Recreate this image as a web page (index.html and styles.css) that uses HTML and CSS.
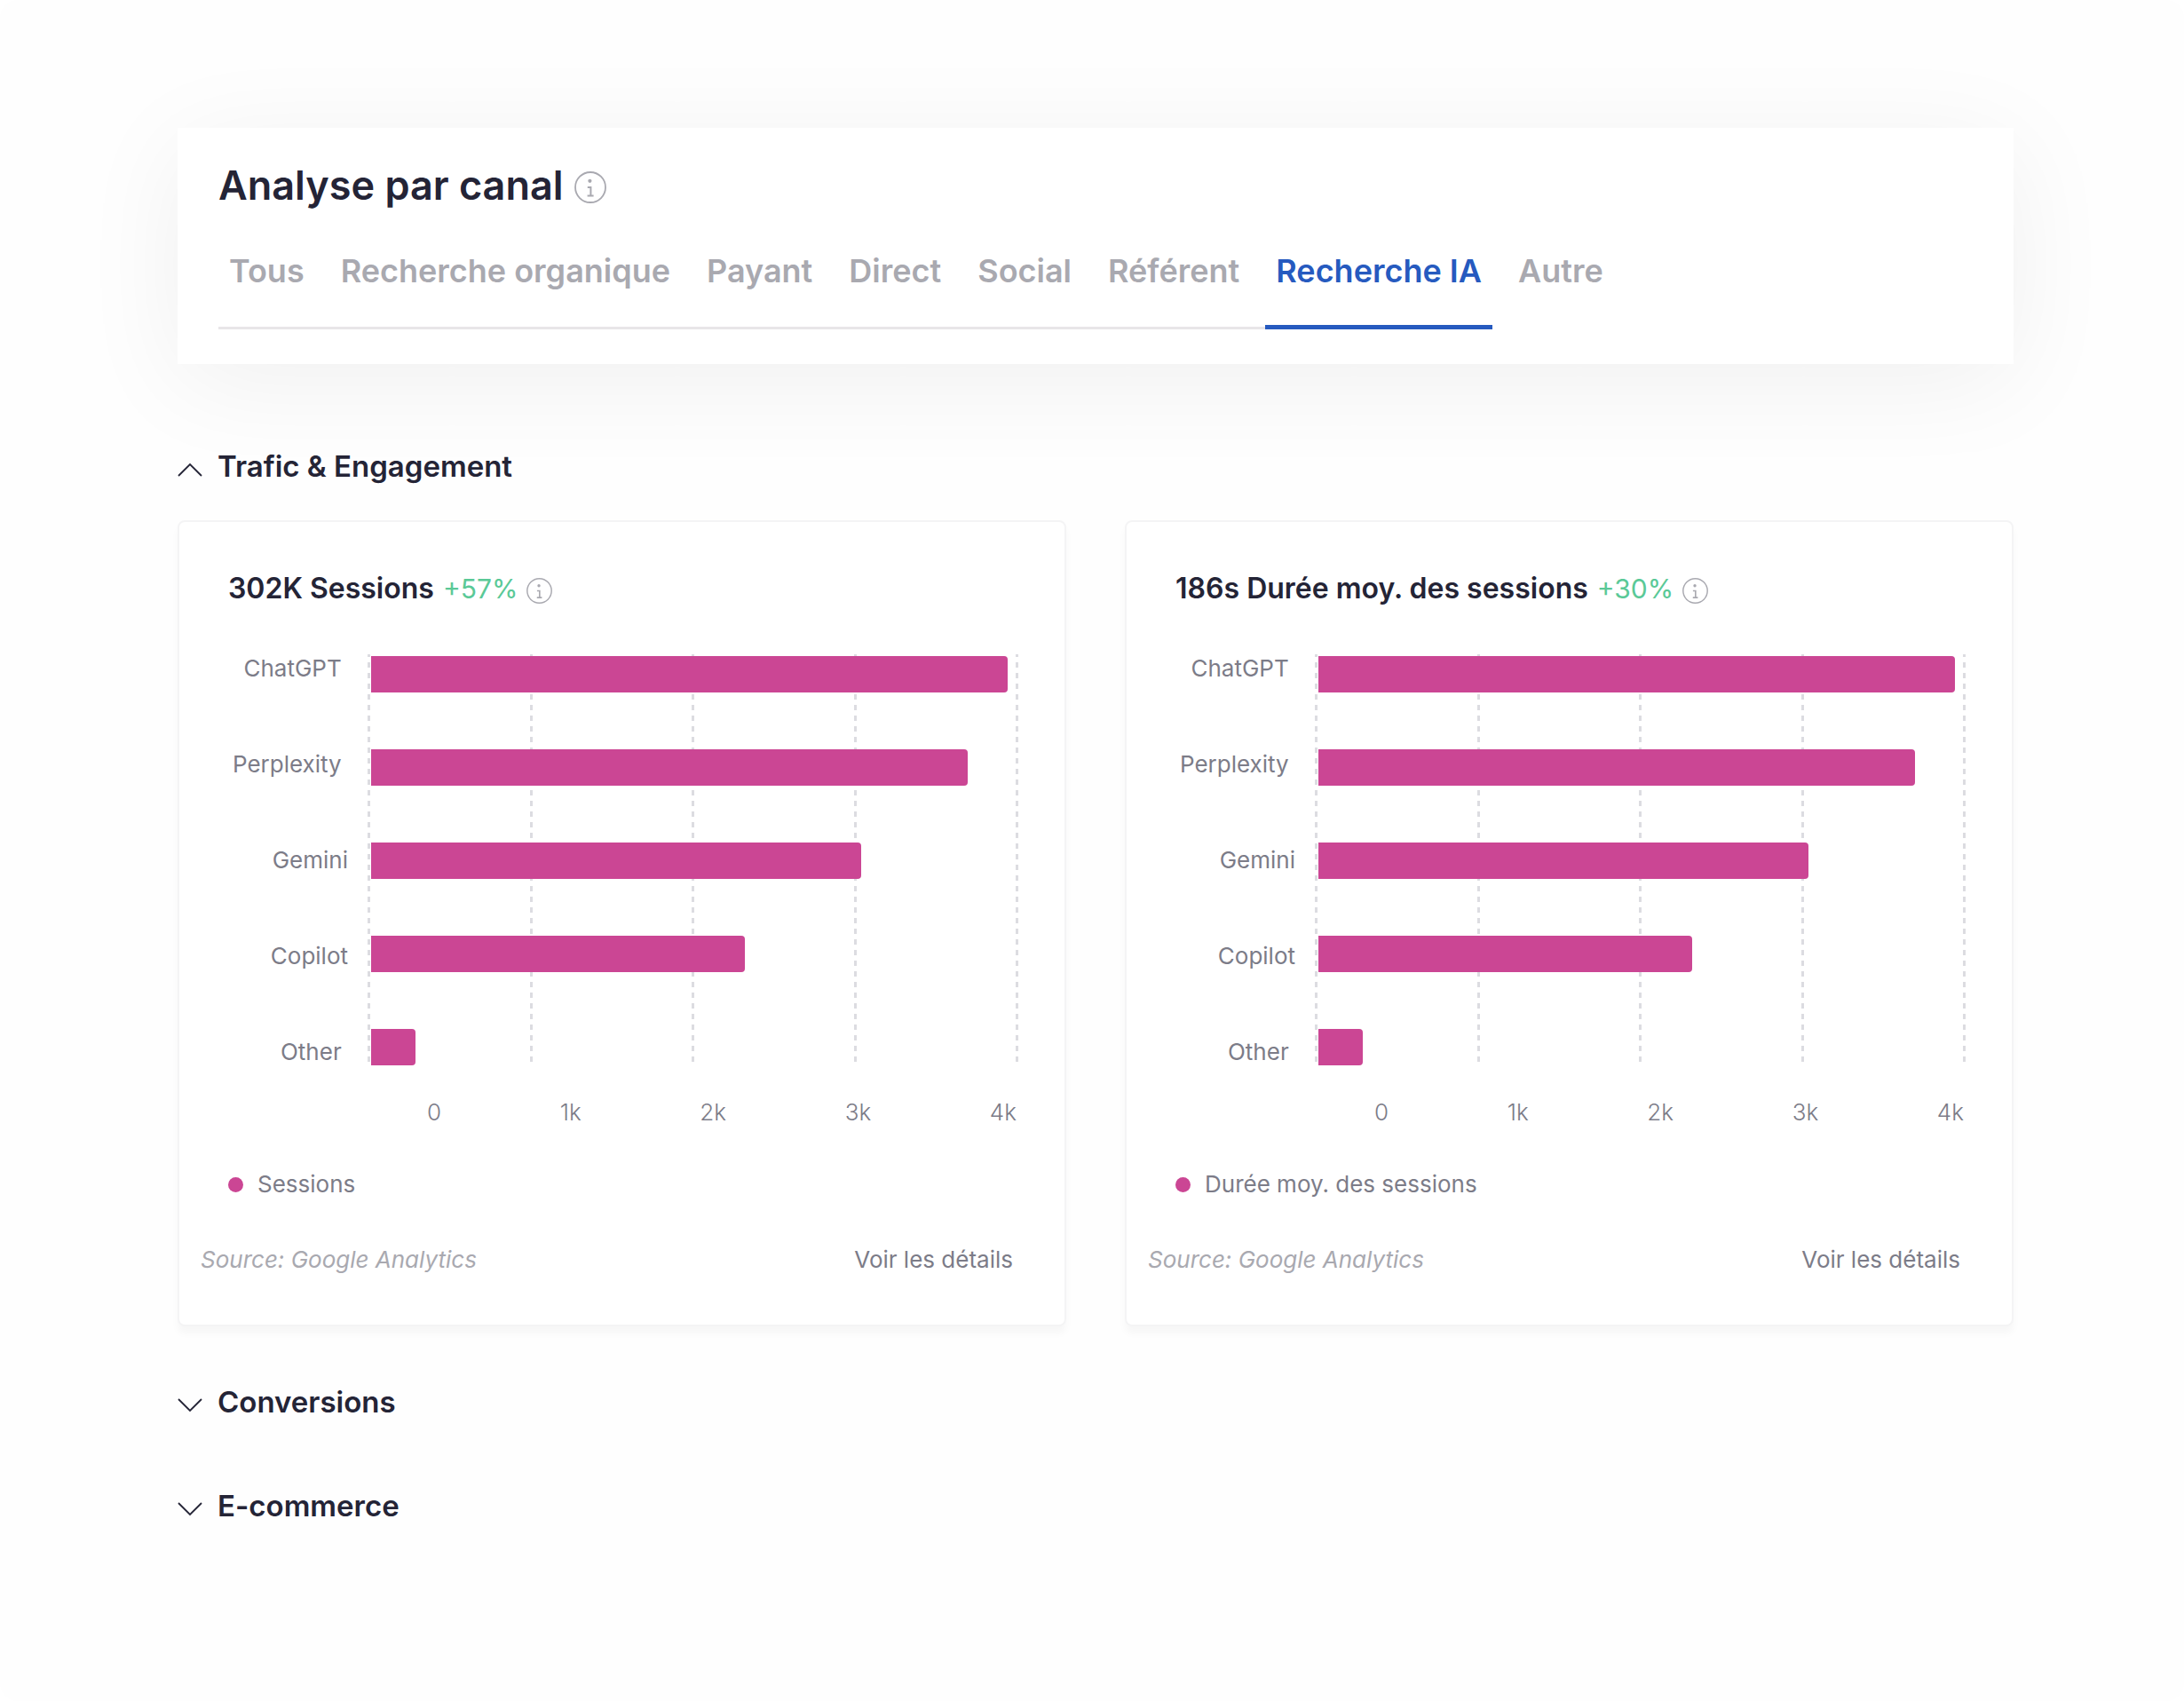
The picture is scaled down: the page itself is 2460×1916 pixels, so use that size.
FILE: index.html
```
<!DOCTYPE html>
<html lang="fr">
<head>
    <meta charset="UTF-8">
    <meta name="viewport" content="width=device-width, initial-scale=1.0">
    <title>Analyse par canal</title>
    <link rel="stylesheet" href="styles.css">
</head>
<body>
    <!-- Shared icons -->
    <svg class="sprite" aria-hidden="true">
        <symbol id="icon-info" viewBox="0 0 36 36">
            <circle cx="18" cy="18" r="17" fill="none" stroke="currentColor" stroke-width="1.8"/>
            <circle cx="17.4" cy="10.8" r="2.1" fill="currentColor"/>
            <path d="M14.8 18h3.6v9M14.6 27.4h7" fill="none" stroke="currentColor" stroke-width="2"/>
        </symbol>
        <symbol id="icon-chevron" viewBox="0 0 28 16">
            <path d="M1 1l13 13L27 1" fill="none" stroke="currentColor" stroke-width="1.8"/>
        </symbol>
    </svg>

    <main class="page">
        <header class="channel-card">
            <h1 class="channel-title">
                Analyse par canal
                <svg class="info-icon large"><use href="#icon-info"/></svg>
            </h1>
            <ul class="tabs">
                <li class="tab"><button type="button">Tous</button></li>
                <li class="tab"><button type="button">Recherche organique</button></li>
                <li class="tab"><button type="button">Payant</button></li>
                <li class="tab"><button type="button">Direct</button></li>
                <li class="tab"><button type="button">Social</button></li>
                <li class="tab"><button type="button">Référent</button></li>
                <li class="tab active"><button type="button" aria-current="true">Recherche IA</button></li>
                <li class="tab"><button type="button">Autre</button></li>
            </ul>
        </header>

        <section class="section">
            <h2>
                <button class="section-toggle" type="button" aria-expanded="true">
                    <svg class="chevron"><use href="#icon-chevron"/></svg>
                    Trafic &amp; Engagement
                </button>
            </h2>

            <div class="cards">
                <article class="card">
                    <h3 class="card-title">
                        302K Sessions
                        <span class="growth">+57%</span>
                        <svg class="info-icon"><use href="#icon-info"/></svg>
                    </h3>
                    <div class="chart">
                        <ul class="labels">
                            <li>ChatGPT&nbsp;</li>
                            <li>Perplexity&nbsp;</li>
                            <li>Gemini</li>
                            <li>Copilot</li>
                            <li>Other&nbsp;</li>
                        </ul>
                        <div class="plot">
                            <div class="grid"><i></i><i></i><i></i><i></i><i></i></div>
                            <div class="bar" style="width: 98.4%"></div>
                            <div class="bar" style="width: 92.2%"></div>
                            <div class="bar" style="width: 75.7%"></div>
                            <div class="bar" style="width: 57.8%"></div>
                            <div class="bar" style="width: 6.8%"></div>
                        </div>
                    </div>
                    <div class="axis">
                        <span>0</span><span>1k</span><span>2k</span><span>3k</span><span>4k</span>
                    </div>
                    <p class="legend">Sessions</p>
                    <footer class="card-footer">
                        <em class="source">Source: Google Analytics</em>
                        <a class="details" href="#">Voir les détails</a>
                    </footer>
                </article>

                <article class="card">
                    <h3 class="card-title">
                        186s Durée moy. des sessions
                        <span class="growth">+30%</span>
                        <svg class="info-icon"><use href="#icon-info"/></svg>
                    </h3>
                    <div class="chart">
                        <ul class="labels">
                            <li>ChatGPT&nbsp;</li>
                            <li>Perplexity&nbsp;</li>
                            <li>Gemini</li>
                            <li>Copilot</li>
                            <li>Other&nbsp;</li>
                        </ul>
                        <div class="plot">
                            <div class="grid"><i></i><i></i><i></i><i></i><i></i></div>
                            <div class="bar" style="width: 98.4%"></div>
                            <div class="bar" style="width: 92.2%"></div>
                            <div class="bar" style="width: 75.7%"></div>
                            <div class="bar" style="width: 57.8%"></div>
                            <div class="bar" style="width: 6.8%"></div>
                        </div>
                    </div>
                    <div class="axis">
                        <span>0</span><span>1k</span><span>2k</span><span>3k</span><span>4k</span>
                    </div>
                    <p class="legend">Durée moy. des sessions</p>
                    <footer class="card-footer">
                        <em class="source">Source: Google Analytics</em>
                        <a class="details" href="#">Voir les détails</a>
                    </footer>
                </article>
            </div>
        </section>

        <section class="section collapsed">
            <h2>
                <button class="section-toggle" type="button" aria-expanded="false">
                    <svg class="chevron"><use href="#icon-chevron"/></svg>
                    Conversions
                </button>
            </h2>
        </section>

        <section class="section collapsed">
            <h2>
                <button class="section-toggle" type="button" aria-expanded="false">
                    <svg class="chevron"><use href="#icon-chevron"/></svg>
                    E-commerce
                </button>
            </h2>
        </section>
    </main>
</body>
</html>
```
FILE: styles.css
```
* {
    margin: 0;
    padding: 0;
    box-sizing: border-box;
}

body {
    font-family: Inter, Roboto, sans-serif;
    font-size: 26px;
    line-height: 32px;
    color: #7c7c88;
    background: #fff;
}

ul {
    list-style: none;
}

button {
    font: inherit;
    color: inherit;
    background: none;
    border: none;
    cursor: pointer;
}

.sprite {
    display: none;
}

.page {
    min-height: 100vh;
    padding: 144px 192px 144px 200px;
    background: #fefefe;
    border-radius: 20px;
}

/* Channel header */
.channel-card {
    padding: 38px 46px 39px;
    background: #fff;
    box-shadow: 0 20px 120px rgba(0, 0, 0, 0.06);
}

.channel-title {
    display: flex;
    align-items: center;
    gap: 12px;
    font-size: 45px;
    font-weight: 600;
    line-height: 54px;
    color: #242436;
}

.info-icon {
    width: 29px;
    height: 29px;
    color: #a9a9b0;
}

.info-icon.large {
    width: 36px;
    height: 36px;
    margin-top: 4px;
}

.tabs {
    display: flex;
    margin-top: 47px;
    font-size: 36px;
    font-weight: 600;
    line-height: 44px;
    color: #a9a9b0;
}

.tab {
    padding-right: 17px;
    border-bottom: 3px solid #e8e6e8;
}

.tab button {
    padding: 0 12px;
}

.tab.active {
    padding-right: 0;
    margin-right: 17px;
    color: #265abf;
    border: none;
}

.tab.active button {
    padding-bottom: 39px;
    border-bottom: 5px solid #265abf;
}

.tab.active ~ .tab {
    border-color: transparent;
}

/* Sections */
.section {
    margin-top: 95px;
}

.section.collapsed {
    margin-top: 65px;
}

.section.collapsed + .collapsed {
    margin-top: 77px;
}

.section h2 {
    display: flex;
}

.section-toggle {
    display: flex;
    align-items: center;
    gap: 17px;
    font-size: 33px;
    font-weight: 600;
    line-height: 40px;
    color: #242436;
}

.chevron {
    width: 28px;
    height: 16px;
    margin-top: 8px;
}

.section-toggle[aria-expanded="true"] .chevron {
    transform: rotate(180deg);
}

/* Cards */
.cards {
    display: grid;
    grid-template-columns: 1fr 1fr;
    gap: 66px;
    margin-top: 41px;
}

.card {
    padding: 55px 52px 57px 55px;
    background: #fff;
    border: 2px solid #f4f4f5;
    border-radius: 8px;
    box-shadow: 0 8px 8px rgba(0, 0, 0, 0.03);
}

.card-title {
    display: flex;
    align-items: center;
    gap: 10px;
    font-size: 32px;
    font-weight: 600;
    line-height: 40px;
    color: #242436;
}

.growth {
    font-size: 30px;
    font-weight: 400;
    color: #5ac997;
}

.card-title .info-icon {
    margin-top: 5px;
}

/* Bar chart */
.chart {
    display: flex;
    gap: 22px;
    margin-top: 54px;
}

.labels {
    display: flex;
    flex-direction: column;
    gap: 76px;
    width: 135px;
    text-align: right;
}

.plot {
    position: relative;
    flex: 1;
    display: flex;
    flex-direction: column;
    gap: 64px;
    height: 465px;
    padding: 2px 0 0 4px;
}

.grid {
    position: absolute;
    inset: 0;
    display: flex;
    justify-content: space-between;
}

.grid i {
    width: 3px;
    background: repeating-linear-gradient(#dcdce1 0 3px, transparent 3px 9px, #dcdce1 9px 12px);
}

.bar {
    position: relative;
    height: 41px;
    background: #cb4694;
    border-radius: 0 4px 4px 0;
}

.axis {
    display: flex;
    justify-content: space-between;
    margin: 35px 2px 0 224px;
    font-weight: 300;
}

.legend {
    display: flex;
    align-items: center;
    gap: 16px;
    margin-top: 49px;
}

.legend::before {
    content: '';
    width: 17px;
    height: 17px;
    background: #cb4694;
    border-radius: 50%;
}

.card-footer {
    display: flex;
    justify-content: space-between;
    margin: 53px 6px 0 -31px;
}

.source {
    color: #a9a9b0;
}

.details {
    color: inherit;
    text-decoration: none;
}
```
